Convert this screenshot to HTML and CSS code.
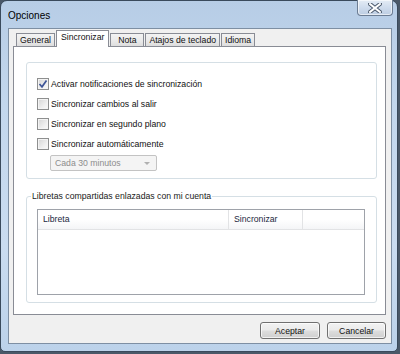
FILE: index.html
```html
<!DOCTYPE html>
<html lang="es">
<head>
    <meta charset="UTF-8">
    <title>Opciones</title>
    <link rel="stylesheet" href="styles.css">
</head>
<body>

<div class="window">
    <!-- Title bar -->
    <div class="titlebar">
        <span class="title">Opciones</span>
        <div class="close">
            <svg width="14" height="10" viewBox="0 0 14 10">
                <path d="M2 1 L12 9 M12 1 L2 9" stroke="#4d5b6e" stroke-width="4" stroke-linecap="square"/>
                <path d="M2 1 L12 9 M12 1 L2 9" stroke="#ffffff" stroke-width="2" stroke-linecap="square"/>
            </svg>
        </div>
    </div>

    <div class="client">
        <!-- Tabs -->
        <div class="tabs">
            <div class="tab">General</div>
            <div class="tab active">Sincronizar</div>
            <div class="tab">Nota</div>
            <div class="tab">Atajos de teclado</div>
            <div class="tab">Idioma</div>
        </div>

        <div class="panel">
            <div class="group">
                <div class="check">
                    <span class="box checked">
                        <svg width="10" height="10" viewBox="0 0 10 10">
                            <path d="M1.5 5 L4 7.8 L8.5 1.5" fill="none" stroke="#3e5597" stroke-width="1.7"/>
                        </svg>
                    </span>
                    Activar notificaciones de sincronización
                </div>
                <div class="check"><span class="box"></span>Sincronizar cambios al salir</div>
                <div class="check"><span class="box"></span>Sincronizar en segundo plano</div>
                <div class="check"><span class="box"></span>Sincronizar automáticamente</div>
                <div class="select">
                    <span>Cada 30 minutos</span>
                    <span class="arrow"></span>
                </div>
            </div>

            <fieldset class="shared">
                <legend>Libretas compartidas enlazadas con mi cuenta</legend>
                <div class="list">
                    <div class="list-head">
                        <div class="col col-name">Libreta</div>
                        <div class="col col-sync">Sincronizar</div>
                        <div class="col col-fill"></div>
                    </div>
                </div>
            </fieldset>
        </div>

        <div class="buttons">
            <button class="btn btn-ok">Aceptar</button>
            <button class="btn btn-cancel">Cancelar</button>
        </div>
    </div>
</div>

</body>
</html>
```

FILE: styles.css
```css
body {
    margin: 0;
    width: 400px;
    height: 354px;
    overflow: hidden;
    background-color: #4a5868;
    font-family: "Liberation Sans", Arial, sans-serif;
    font-size: 8.7px;
    color: #111;
}
.window {
    box-sizing: border-box;
    width: 398px;
    height: 352px;
    border: 1px solid #3a4a5c;
    border-radius: 7px 7px 5px 5px;
    background: linear-gradient(180deg, #b7cde6 0%, #c3d7ed 30%, #cadcf0 70%, #bcd2ea 100%);
    padding: 0 5px 7px 7px;
    display: flex;
    flex-direction: column;
}
/* Title bar */
.titlebar {
    height: 27px;
    flex: none;
    display: flex;
    align-items: flex-start;
    justify-content: space-between;
}
.title {
    font-size: 10px;
    margin-top: 9px;
    color: #000;
}
.close {
    width: 36px;
    height: 16px;
    margin-top: -1px;
    margin-right: -1px;
    box-sizing: border-box;
    border: 1px solid #6c7d93;
    border-top: none;
    border-radius: 0 0 4px 4px;
    background: linear-gradient(180deg, #e4ecf5 0%, #cfdced 50%, #bccde2 100%);
    box-shadow: inset 0 0 0 1px rgba(255, 255, 255, 0.6);
    display: flex;
    align-items: center;
    justify-content: center;
}
/* Client area */
.client {
    flex: 1;
    border: 1px solid #7e8fa3;
    background-color: #f0f0f0;
    padding: 2px 5px 0 4px;
    display: flex;
    flex-direction: column;
}
.tabs {
    display: flex;
    align-items: flex-end;
    height: 16px;
    margin-left: 3px;
    margin-bottom: -1px;
    position: relative;
    z-index: 1;
}
.tab {
    box-sizing: border-box;
    height: 13px;
    min-width: 34px;
    padding: 0 3px;
    border: 1px solid #898c95;
    border-bottom: none;
    background: linear-gradient(180deg, #f3f3f3 0%, #ebebeb 50%, #dddddd 100%);
    line-height: 13px;
    text-align: center;
    margin-bottom: 1px;
}
.tab + .tab {
    margin-left: 1px;
}
.tab.active {
    height: 17px;
    margin-bottom: 0;
    padding: 0 4px;
    background: #fff;
    line-height: 12px;
}
.panel {
    height: 269px;
    box-sizing: border-box;
    border: 1px solid #898c95;
    background-color: #fff;
    padding: 15px 8px 0 12px;
}
.group {
    box-sizing: border-box;
    height: 117px;
    border: 1px solid #d5dfe5;
    border-radius: 3px;
    padding: 11px 10px 0 10px;
}
.check {
    height: 20px;
    display: flex;
    align-items: center;
}
.box {
    box-sizing: border-box;
    width: 12px;
    height: 12px;
    margin-right: 2px;
    border: 1px solid #8e8f8f;
    background: linear-gradient(135deg, #d4d4d4 0%, #eeeeee 60%, #fafafa 100%);
    box-shadow: inset 0 0 0 1px #f4f4f4;
    display: flex;
    align-items: center;
    justify-content: center;
}
.select {
    box-sizing: border-box;
    width: 107px;
    height: 16px;
    margin: 1px 0 0 13px;
    border: 1px solid #c3c3c3;
    border-radius: 2px;
    background-color: #f4f4f4;
    color: #8d8d8d;
    padding: 0 6px 0 4px;
    display: flex;
    align-items: center;
    justify-content: space-between;
}
.arrow {
    width: 0;
    height: 0;
    border-left: 3px solid transparent;
    border-right: 3px solid transparent;
    border-top: 3px solid #b0b0b0;
}
/* Shared notebooks */
.shared {
    margin: 12px 0 0 0;
    height: 112px;
    box-sizing: border-box;
    border: 1px solid #d5dfe5;
    border-radius: 3px;
    padding: 0 11px 6px 10px;
    min-width: 0;
}
.shared legend {
    margin-left: -6px;
    padding: 0 1px;
    line-height: 11px;
    color: #1a1a1a;
}
.list {
    margin-top: 7px;
    height: 86px;
    box-sizing: border-box;
    border: 1px solid #9ea2a9;
}
.list-head {
    height: 19px;
    display: flex;
    border-bottom: 1px solid #e2e3e5;
    background: linear-gradient(180deg, #ffffff 0%, #ffffff 50%, #f4f5f7 100%);
}
.col {
    box-sizing: border-box;
    line-height: 19px;
    padding-left: 5px;
    color: #1c2840;
}
.col-name {
    width: 191px;
    border-right: 1px solid #e2e3e5;
}
.col-sync {
    width: 74px;
    border-right: 1px solid #e2e3e5;
}
.col-fill {
    flex: 1;
}
/* Buttons */
.buttons {
    display: flex;
    justify-content: flex-end;
    gap: 7px;
    margin-top: 7px;
}
.btn {
    box-sizing: border-box;
    height: 17px;
    width: 60px;
    padding: 0;
    border: 1px solid #707070;
    border-radius: 3px;
    background: linear-gradient(180deg, #f2f2f2 0%, #ebebeb 48%, #dddddd 52%, #cfcfcf 100%);
    box-shadow: inset 0 0 0 1px rgba(255, 255, 255, 0.7);
    font-family: "Liberation Sans", Arial, sans-serif;
    font-size: 8.7px;
    color: #111;
}
.btn-cancel {
    width: 59px;
}
```
